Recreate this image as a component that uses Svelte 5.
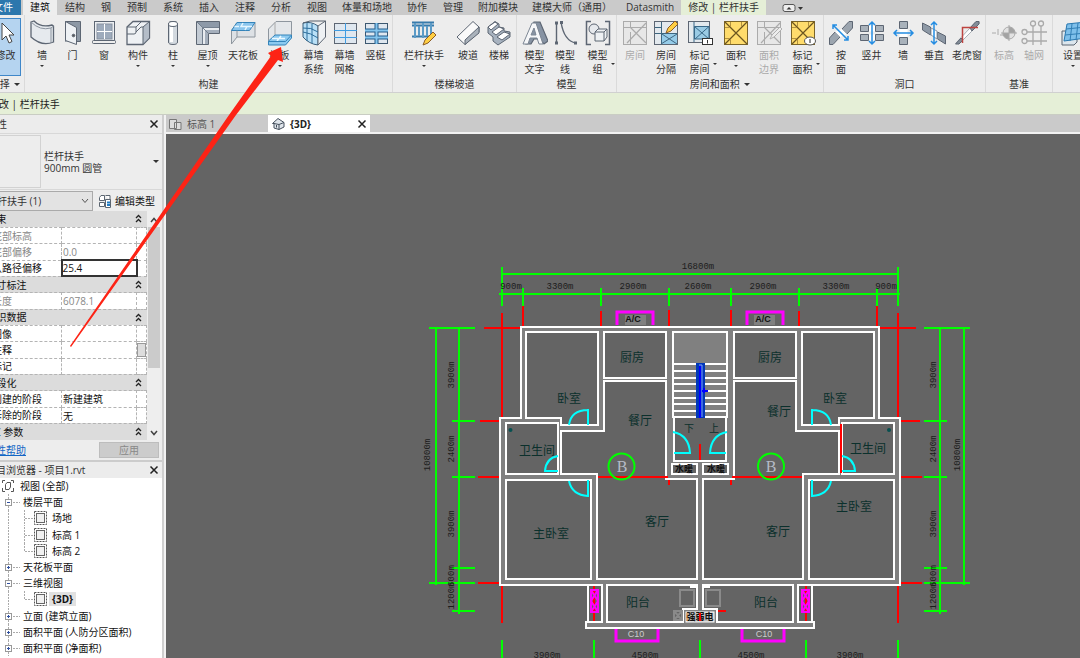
<script>
    const tabs = [ "结构", "钢", "预制", "系统", "插入", "注释", "分析", "视图", "体量和场地", "协作", "管理", "附加模块", "建模大师（通用）", "Datasmith" ];

    const groups = [
        { id: "build", title: "构建", tools: [
            { icon: "wall", lines: ["墙"], menu: "below" },
            { icon: "door", lines: ["门"] },
            { icon: "window", lines: ["窗"] },
            { icon: "component", lines: ["构件"], menu: "below" },
            { icon: "column", lines: ["柱"], menu: "below" },
            { icon: "roof", lines: ["屋顶"], menu: "below" },
            { icon: "ceiling", lines: ["天花板"] },
            { icon: "floor", lines: ["楼板"], menu: "below" },
            { icon: "curtain", lines: ["幕墙", "系统"] },
            { icon: "grid", lines: ["幕墙", "网格"] },
            { icon: "mullion", lines: ["竖梃"] }
        ] },
        { id: "stairs", title: "楼梯坡道", tools: [
            { icon: "railing", lines: ["栏杆扶手"], menu: "below" },
            { icon: "ramp", lines: ["坡道"] },
            { icon: "stair", lines: ["楼梯"] }
        ] },
        { id: "model", title: "模型", tools: [
            { icon: "text", lines: ["模型", "文字"] },
            { icon: "line", lines: ["模型", "线"] },
            { icon: "group", lines: ["模型", "组"], menu: "side" }
        ] },
        { id: "room", title: "房间和面积", more: true, tools: [
            { icon: "room", lines: ["房间"], off: true },
            { icon: "separate", lines: ["房间", "分隔"] },
            { icon: "tagroom", lines: ["标记", "房间"], menu: "side" },
            { icon: "area", lines: ["面积"], menu: "below" },
            { icon: "boundary", lines: ["面积", "边界"], off: true },
            { icon: "tagarea", lines: ["标记", "面积"], menu: "side" }
        ] },
        { id: "opening", title: "洞口", tools: [
            { icon: "byface", lines: ["按", "面"] },
            { icon: "shaft", lines: ["竖井"] },
            { icon: "wallopen", lines: ["墙"] },
            { icon: "vertical", lines: ["垂直"] },
            { icon: "dormer", lines: ["老虎窗"] }
        ] },
        { id: "datum", title: "基准", tools: [
            { icon: "level", lines: ["标高"], off: true },
            { icon: "axis", lines: ["轴网"], off: true }
        ] },
        { id: "plane", title: "", tools: [
            { icon: "set", lines: ["设置"], menu: "below" }
        ] }
    ];

    const props = [
        { head: "约束" },
        { name: "底部标高", value: "", off: true },
        { name: "底部偏移", value: "0.0", off: true },
        { name: "从路径偏移", value: "25.4", focus: true },
        { head: "尺寸标注" },
        { name: "长度", value: "6078.1", off: true },
        { head: "标识数据" },
        { name: "图像", value: "" },
        { name: "注释", value: "", button: true },
        { name: "标记", value: "" },
        { head: "阶段化" },
        { name: "创建的阶段", value: "新建建筑" },
        { name: "拆除的阶段", value: "无" },
        { head: "IFC 参数" }
    ];

    const tree = [
        { level: 0, text: "视图 (全部)" },
        { level: 1, text: "楼层平面", open: true },
        { level: 2, text: "场地" },
        { level: 2, text: "标高 1" },
        { level: 2, text: "标高 2", last: true },
        { level: 1, text: "天花板平面" },
        { level: 1, text: "三维视图", open: true },
        { level: 2, text: "{3D}", last: true, active: true },
        { level: 1, text: "立面 (建筑立面)" },
        { level: 1, text: "面积平面 (人防分区面积)" },
        { level: 1, text: "面积平面 (净面积)" }
    ];

    const rooms = [
        ["厨房", 632, 357], ["卧室", 569, 398], ["餐厅", 640, 420], ["卫生间", 537, 450],
        ["主卧室", 551, 533], ["客厅", 657, 521], ["阳台", 638, 602],
        ["厨房", 770, 357], ["卧室", 835, 398], ["餐厅", 779, 411], ["卫生间", 868, 448],
        ["主卧室", 854, 506], ["客厅", 778, 531], ["阳台", 766, 602]
    ];

    const dimsAcross = [
        ["16800m", 698, 266], ["900m", 511, 286], ["3300m", 560, 286], ["2900m", 633, 286], ["2600m", 698, 286],
        ["2900m", 763, 286], ["3300m", 836, 286], ["900m", 886, 286],
        ["3900m", 547, 655], ["4500m", 645, 655], ["4500m", 751, 655], ["3900m", 850, 655]
    ];

    const dimsUp = [
        ["3900m", 451, 375], ["2400m", 451, 449], ["3900m", 451, 524], ["600m", 451, 576], ["1200m", 451, 596], ["10800m", 427, 455],
        ["3900m", 933, 375], ["2400m", 933, 449], ["3900m", 933, 524], ["600m", 933, 576], ["1200m", 933, 596], ["10800m", 957, 455]
    ];

    const steps = [364, 371, 378, 384, 391, 398, 404, 411, 417];
</script>

{#snippet cross()}
    <svg width="10" height="10" viewBox="0 0 10 10"><path d="M1.5 1.5 8.5 8.5M8.5 1.5 1.5 8.5" stroke="#222" stroke-width="1.5" /></svg>
{/snippet}

{#snippet roombase(fill, stroke)}
    <rect x="1.500" y="1.500" width="23" height="23" {fill} {stroke} />
    <path d="M2 7.500H8M8.500 2V8M8.500 12V24M8 7.500H24" fill="none" {stroke} />
    <path d="M8 7 24 23M24 3 5 23" fill="none" {stroke} stroke-width="1.200" />
{/snippet}

{#snippet areabase()}
    <rect x="1.500" y="1.500" width="23" height="23" fill="#ffdc6c" stroke="#7a6429" />
    <path d="M2 2 24 24M24 2 2 24" stroke="#6b5520" stroke-width="1.200" />
    <path d="M7.500 2V7M2 7.500H7M18.500 2V7M7.500 19V24M7 18.500H2" stroke="#b3923f" />
{/snippet}

{#snippet icon(name)}
    <svg class="icon" width="26" height="26" viewBox="0 0 26 26" fill="none" stroke="#5d6673" stroke-width="1">
        {#if name == "wall"}
            <path d="M2 2 5 1Q12 8 23 5L24.500 6V22Q13 27 2 17Z" fill="#e6eaee" stroke-width="1.3" />
            <path d="M2 2Q11 11 22 8V23M22 8 24.500 6" stroke="#8b939e" />
        {:else if name == "door"}
            <path d="M5.500 21.500V1.500H20.500V21.500H17" fill="#8d98a5" />
            <path d="M5.500 1.500 16.500 7.500V24.500L5.500 20.500Z" fill="#eef1f4" />
            <circle cx="13.500" cy="15.500" r="1.300" fill="#555" />
        {:else if name == "window"}
            <rect x="3.500" y="1.500" width="20" height="19" fill="#eceff2" />
            <rect x="6" y="4" width="15" height="15" fill="#9eabbc" stroke="#8792a0" />
            <path d="M13.500 4V19M6 11.500H21" stroke="#fff" />
            <rect x="1.500" y="20.500" width="23" height="3" rx="1" fill="#eee" />
        {:else if name == "component"}
            <path d="M2 7 8 1.500H24.500V18L18 24.500H2V14Z" fill="#eef1f4" stroke-width="1.300" />
            <path d="M18 7 24.500 1.500V18L18 24.500Z" fill="#b4bdc8" />
            <path d="M2 14H9Q11 14 11 12V7H2M11 7 16 2M11 12 16 7H18" />
        {:else if name == "column"}
            <path d="M8.500 4Q8.500 1.500 13 1.500T17.500 4V22Q17.500 24.500 13 24.500T8.500 22Z" fill="#d3d9df" />
            <path d="M11.500 7V22" stroke="#fff" stroke-width="3" />
            <ellipse cx="13" cy="4" rx="4.500" ry="2.500" fill="#fff" />
        {:else if name == "roof"}
            <path d="M1.500 1.500H24.500V13.500H13.500V24.500H1.500Z" fill="#c3cbd4" />
            <path d="M2 2 7.500 7.500H24V2Z" fill="#8d99a8" stroke="none" />
            <path d="M7.500 7.500V24H13V13H24V7.500Z" fill="#e9ecf0" stroke="none" />
            <path d="M13 13V24H10V10H24V13Z" fill="#a5afbc" stroke="none" />
            <path d="M7.500 7.500H24M7.500 7.500V24M2 2 13 13" stroke="#737f8e" />
        {:else if name == "ceiling"}
            <path d="M1.500 10.500 7 2.500H25V17H7L1.500 24Z" fill="#dde1e5" stroke="#8e969e" />
            <path d="M1.500 10.500 7 2.500H25L19.500 10.500Z" fill="#8ac5ed" stroke="#3484ba" />
            <path d="M4.500 6.500H9M13 3 11 6.500H17M15 10 17 6.500H22" stroke="#e5f6ff" stroke-width="1.500" />
            <path d="M7 10.500V17" stroke="#8e969e" />
        {:else if name == "floor"}
            <path d="M1.500 21V9L9 1.500H24.500V15L17 24Z" fill="#e4e7ea" stroke="#8e969e" />
            <path d="M8 2.500V15" stroke="#aaa" />
            <path d="M1.500 21 8 15H24.500V18L18.500 25H1.500Z" fill="#8ccaf0" stroke="#3484ba" />
            <path d="M5 18.500H11M14 16 12 18.500H18M10 21 12 18.500" stroke="#eaf8ff" stroke-width="1.500" />
            <path d="M2 21.500H18.500L24 15.500" stroke="#3484ba" />
        {:else if name == "curtain"}
            <path d="M2 3Q10 1 17 6V25Q8 24 2 17Z" fill="#b9e0f7" stroke="#365d7b" />
            <path d="M17 6 24.500 1V17L17 25Z" fill="#eef1f4" />
            <path d="M2 3 9 1H24.500" stroke="#56616d" />
            <path d="M6 3V21M11 4V23M2 8Q10 7 17 12M2 12Q10 13 17 18" stroke="#2c6e9c" />
        {:else if name == "grid"}
            <rect x="2.500" y="3.500" width="22" height="20" fill="#dfe7ef" />
            <path d="M13.500 3V24M2 10.500H25M2 17.500H25" stroke="#409ce1" />
        {:else if name == "mullion"}
            <rect x="2.500" y="3.500" width="22" height="20" fill="#dfe7ef" stroke="#3d5870" />
            <path d="M13.500 3V24M2 10.500H25M2 17.500H25" stroke="#245d8c" stroke-width="4" />
            <path d="M13.500 3V24M2 10.500H25M2 17.500H25" stroke="#84c5ed" stroke-width="2" />
        {:else if name == "railing"}
            <path d="M1 2.500H23M1 5.500H23M1 16.500H21" stroke="#387bab" stroke-width="2" />
            <path d="M4 3V18M8 6V16M12 3V18M16 6V16M20 3V14" stroke="#5b9bc7" stroke-width="2" />
            <path d="M12 25 14 20 22 12 25 15 17 23Z" fill="#ffcf43" stroke="#8b5b27" />
        {:else if name == "ramp"}
            <path d="M2 17 18 1.500 24 7V12L10 24.500Z" fill="#fafafa" />
            <path d="M10 24.500V20L24 7V13Z" fill="#aab2bb" />
        {:else if name == "stair"}
            <path d="M2 7 9 1.500 13 4V7L18 8V11L24 12V17L12 25 7 21V17L2 13Z" fill="#a7b2bf" />
            <path d="M2 7 9 2 12 4 5 10ZM6 12 13 7 18 9 10 15ZM11 17 18 12 24 14 16 20Z" fill="#fff" />
        {:else if name == "text"}
            <path d="M4 24 12 2H18L26 21 22 24 18 19H12L9 24ZM14 14H17L15 8Z" fill="#8793a3" stroke-width="1.200" />
            <path d="M1 24 10 3H14L21 24H17L15 18H8L6 24ZM9 15H14L12 8Z" fill="#f6f7f9" stroke="#7d8794" />
        {:else if name == "line"}
            <path d="M4.500 3V24M9 2Q12 21 24 23" stroke-width="1.400" />
            <path d="M3 1.500H6V4.500H3ZM3 21.500H6V24.500H3ZM8 1H11V4H8ZM22 21.500H25V24.500H22Z" fill="#5d6673" stroke="none" />
        {:else if name == "group"}
            <path d="M6 1.500H1.500V24.500H6M20 1.500H24.500V24.500H20" stroke-width="1.500" />
            <circle cx="9" cy="9" r="5" fill="#e6e9ed" />
            <path d="M10 12 13 9H22V17L19 21H10Z" fill="#eef1f4" />
            <path d="M10 12H19V21M19 12 22 9" />
        {:else if name == "room"}
            <g opacity=".6">{@render roombase("#e4e4e4", "#808080")}</g>
        {:else if name == "separate"}
            <rect x="1.500" y="1.500" width="23" height="23" fill="#e3e9ee" />
            <rect x="8" y="14" width="16" height="10" fill="#96cce9" stroke="none" />
            <path d="M2 7.500H8M8.500 2V24M2 13.500H24M8 24 24 14M9 14 24 24" stroke="#3d6680" />
            <path d="M13 13 15 8 22 1 25 4 18 11Z" fill="#ffcf43" stroke="#8b5b27" />
        {:else if name == "tagroom"}
            <rect x="1.500" y="1.500" width="21" height="21" fill="#e3e9ee" />
            <path d="M7.500 6.500H22V19H7.500ZM7.500 6.500 22 19M22 6.500 8 19M7 2V22" fill="#9acbe5" stroke="#396989" />
            <rect x="15.500" y="18.500" width="10" height="6" fill="#fff" stroke="#333" />
            <path d="M20.500 20V23.500" stroke="#333" />
        {:else if name == "area"}
            {@render areabase()}
        {:else if name == "boundary"}
            <g opacity=".6">
                {@render roombase("#e4e4e4", "#808080")}
                <path d="M14 19 16 15 24 7 26 9 18 17Z" fill="#eee" stroke="#888" />
            </g>
        {:else if name == "tagarea"}
            {@render areabase()}
            <ellipse cx="20" cy="21" rx="5.500" ry="4" fill="#fff" stroke="#555" />
            <path d="M20 19V23" stroke="#222" />
        {:else if name == "byface"}
            <path d="M14 9 21 1.500H24.500V8L19 14ZM1.500 18 7 12 12 17 5 24.500H1.500Z" fill="#9ca5af" />
            <path d="M7 12 14 9 19 14 12 17Z" fill="#fff" stroke="none" />
            <path d="M5 5 20 20M5 9V5H9M20 16V20H16" stroke="#258de2" stroke-width="1.500" />
        {:else if name == "shaft"}
            <path d="M1.500 5.500H9.500V11.500H1.500ZM16.500 5.500H24.500V11.500H16.500ZM1.500 14.500H9.500V20.500H1.500ZM16.500 14.500H24.500V20.500H16.500Z" fill="#a9b2bb" />
            <path d="M10 5.500H16V11.500H10ZM10 14.500H16V20.500H10Z" fill="#fff" stroke="none" />
            <path d="M13 2V24M10 5 13 2 16 5M10 21 13 24 16 21" stroke="#258de2" stroke-width="1.500" />
        {:else if name == "wallopen"}
            <path d="M9.500 1.500H17.500V8.500H9.500ZM9.500 17.500H17.500V24.500H9.500Z" fill="#a9b2bb" />
            <path d="M9.500 9H17.500V17H9.500Z" fill="#fff" stroke="none" />
            <path d="M4 13H23M7 10 4 13 7 16M20 10 23 13 20 16" stroke="#258de2" stroke-width="1.500" />
        {:else if name == "vertical"}
            <path d="M1.500 3 9.500 7V15L1.500 10ZM16.500 12 24.500 16V24L16.500 19Z" fill="#8e99a6" />
            <path d="M10 8 16 11V19L10 15Z" fill="#fff" stroke="#8e99a6" />
            <path d="M13 2V24M10 5 13 2 16 5M10 21 13 24 16 21" stroke="#258de2" stroke-width="1.500" />
        {:else if name == "dormer"}
            <path d="M2 23 22 1.500H25V4L5 24Z" fill="#fff" stroke="#aab0b6" />
            <path d="M16 8 22 1.500H25V4L18 11ZM1.500 24 7 18 9 20 5 24Z" fill="#838d98" />
            <path d="M8.500 23V7.500H24" stroke="#be4440" stroke-width="1.500" />
        {:else if name == "level"}
            <g stroke="#aaa">
                <path d="M1 13H5M7 9V15M9 15H14M18 5V21M10 13H26" />
                <circle cx="18" cy="13" r="6" fill="#e2e2e2" />
                <path d="M18 13V7A6 6 0 0 1 24 13ZM18 13V19A6 6 0 0 1 12 13Z" fill="#a3a3a3" />
            </g>
        {:else if name == "axis"}
            <g stroke="#aaa" stroke-width="1.300">
                <path d="M12 6V25M20 6V25M6 12H26M6 21H26" />
                <circle cx="12" cy="3.500" r="2.500" /><circle cx="20" cy="3.500" r="2.500" /><circle cx="3.500" cy="12" r="2.500" /><circle cx="3.500" cy="21" r="2.500" />
            </g>
        {:else if name == "set"}
            <path d="M2 11H17V22L14 25H2Z" fill="#dce6ed" />
            <path d="M7 4 26 2V18L4 21Z" fill="#7fc0eb" stroke="#2877af" />
            <path d="M12 4 10 21M18 3 16 20M24 2 22 18M6 9 26 7M5 15 26 13" stroke="#327fb5" />
        {:else if name == "modify"}
            <path d="M9 3V20L13 16 16 23 19 21.500 16 15H21Z" fill="#fff" stroke="#444" />
        {/if}
    </svg>
{/snippet}

{#snippet halfplan()}
    <path class="red" d="M502 313V417M523 304V326M601 311V326M669 310V326M484 328H521M480 421H500M478 477H500M478 583H500M502 586V623" />
    <path class="slab" d="M700 327H521V418H500V585H588V622H586V628H700" />
    <g class="inner">
        <path d="M526 332H598V425H561V418H526Z" />
        <path d="M604 332H666V378H604Z" />
        <path d="M604 381H666V479H697V579H597V474H561V431H604Z" />
        <path d="M506 423H558V474H506Z" />
        <path d="M506 480H591V579H506Z" />
        <path d="M588 585H602V622H588Z" />
        <path d="M607 585H697V609H683V622H607Z" />
        <path d="M700 417H674V461H700" />
        <path d="M672 464H697V474H672Z" />
    </g>
    <path class="red" d="M598 477H668M669 480V485M594 586V621M674 611H682" />
    <path class="cyan" d="M588 409V425M569 425Q571 410 588 410M558 471H545Q546 458 558 456M588 480V496Q572 495 569 481M673 432Q689 435 690 453H674" />
    <path class="magenta" d="M617 325V312H653V325M616 629V641H658V629" />
    <path class="magenta thin" d="M591 590H598V612H591ZM591 590 598 601 591 612M598 590 591 601 598 612" />
    <path class="fixture" d="M680 590H694V606H680Z" />
    <path class="white" d="M690 587H697" />
    <rect x="625" y="315" width="21" height="10" fill="#808080" />
    <path class="green" d="M502 267V306M523 288V306M601 288V306M669 288V306M502 640V660M594 640V660" />
{/snippet}

<div class="app">
    <nav class="tabs">
        <button class="file">文件</button>
        <button class="current">建筑</button>
        {#each tabs as tab}
            <button class:long={tab.length > 3}>{tab}</button>
        {/each}
        <button class="context">修改 | 栏杆扶手</button>
        <button class="toggle" aria-label="最小化">
            <svg width="24" height="10" viewBox="0 0 24 10"><rect x="1" y="1.500" width="12" height="7" rx="2" fill="#eee" stroke="#555" /><path d="M4.500 6.500 7 4 9.500 6.500ZM16 4H21L18.500 7Z" fill="#333" /></svg>
        </button>
    </nav>

    <div class="ribbon">
        <section class="group select">
            <div class="tools">
                <button class="tool pressed">{@render icon("modify")}<span class="label">修改</span></button>
            </div>
            <h2>选择 <i class="caret big"></i></h2>
        </section>
        {#each groups as group}
            <section class="group {group.id}">
                <div class="tools">
                    {#each group.tools as tool}
                        <button class="tool" disabled={tool.off}>
                            {@render icon(tool.icon)}
                            <span class="label" class:side={tool.menu == "side"}>
                                <span>{#each tool.lines as line}<span class="line">{line}</span>{/each}</span>
                                {#if tool.menu}<i class="caret"></i>{/if}
                            </span>
                        </button>
                    {/each}
                </div>
                <h2>{group.title} {#if group.more}<i class="caret big"></i>{/if}</h2>
            </section>
        {/each}
    </div>

    <div class="options">修改 | 栏杆扶手</div>

    <div class="work">
        <aside>
            <header><span>属性</span><button aria-label="关闭属性">{@render cross()}</button></header>
            <button class="type">
                <span class="thumb"></span>
                <span class="typename">栏杆扶手<br />900mm 圆管</span>
                <i class="caret big"></i>
            </button>
            <div class="filter">
                <div class="pick">
                    <select aria-label="类别"><option>栏杆扶手 (1)</option></select>
                    <svg width="8" height="6" viewBox="0 0 8 6"><path d="M1 1 4 4.500 7 1" fill="none" stroke="#555" /></svg>
                </div>
                <button class="edit">
                    <svg width="14" height="14" viewBox="0 0 14 14" fill="#fff" stroke="#5b6570"><path d="M1.500 3.500 3 1.500H6.500V6.500H1.500ZM1.500 8.500H6.500V12.500H1.500ZM7.500 1.500H12V6M7.500 5.500H12.500V13.500H7.500Z" /><path d="M9 8.500H12M9 11H12" stroke="#217cc4" stroke-width="2" /></svg>
                    编辑类型
                </button>
            </div>
            <div class="sheet">
                <table>
                    <colgroup><col class="names" /><col /><col class="ends" /></colgroup>
                    <tbody>
                        {#each props as row, i}
                            {#if row.head}
                                <tr class="head"><th colspan="2">{row.head}</th><td><svg width="7" height="9" viewBox="0 0 7 9"><path d="M1 4 3.500 1.500 6 4M1 8 3.500 5.500 6 8" fill="none" stroke="#222" stroke-width="1.300" /></svg></td></tr>
                            {:else}
                                <tr class:off={row.off}>
                                    <th><label for="prop{i}">{row.name}</label></th>
                                    <td class:focus={row.focus}><input id="prop{i}" value={row.value} disabled={row.off} /></td>
                                    <td>{#if row.button}<button class="mini" aria-label="浏览"></button>{/if}</td>
                                </tr>
                            {/if}
                        {/each}
                    </tbody>
                </table>
                <div class="scroll">
                    <svg width="8" height="6" viewBox="0 0 8 6"><path d="M1 5 4 1.500 7 5" fill="none" stroke="#444" stroke-width="1.500" /></svg>
                    <span class="bar"></span>
                    <svg width="8" height="6" viewBox="0 0 8 6"><path d="M1 1 4 4.500 7 1" fill="none" stroke="#444" stroke-width="1.500" /></svg>
                </div>
            </div>
            <footer><a href="#help">属性帮助</a><button disabled>应用</button></footer>
            <header class="second"><span>项目浏览器 - 项目1.rvt</span><button aria-label="关闭浏览器">{@render cross()}</button></header>
            <div class="treebox">
                <ul class="tree">
                    {#each tree as node}
                        <li>
                            {#if node.level == 0}
                                <svg width="17" height="16" viewBox="0 0 17 16" fill="none" stroke="#555"><path d="M5 2.500H2.500V5M2.500 10V13.500H5M11 2.500H13.500V5M13.500 10V13.500H11M5.500 6.500 7 4.500H10.500V9L9 11.500H5.500Z" /></svg>
                            {:else}
                                <svg width={node.level == 1 ? 20 : 34} height="16" viewBox="0 0 {node.level == 1 ? 20 : 34} 16" fill="none" stroke="#aaa">
                                    <path d="M8.500 0V16" stroke-dasharray="2 1" />
                                    {#if node.level == 1}
                                        <path d="M13 8.500H20" stroke-dasharray="2 1" />
                                        <rect x="5.500" y="5.500" width="6" height="6" fill="#fff" stroke="#999" />
                                        <path d={node.open ? "M7 8.500H10" : "M7 8.500H10M8.500 7V10"} stroke="#2f4f9f" />
                                    {:else}
                                        <path d="M24.500 0V{node.last ? 8 : 16}M25 8.500H34" stroke-dasharray="2 1" />
                                    {/if}
                                </svg>
                            {/if}
                            {#if node.level == 2}
                                <svg width="13" height="14" viewBox="0 0 13 14"><rect x=".5" y=".5" width="12" height="13" fill="#fff" stroke="#555" stroke-dasharray="2 1" /><rect x="2.500" y="2.500" width="8" height="9" fill="#f1f1f1" stroke="#666" /></svg>
                            {/if}
                            <span class:active={node.active}>{node.text}</span>
                        </li>
                    {/each}
                </ul>
            </div>
        </aside>

        <main>
            <div class="views">
                <button class="view">
                    <svg width="13" height="12" viewBox="0 0 13 12" fill="#ddd" stroke="#777"><path d="M.5 1.500H7.500V10.500H.5ZM5.500 4.500H12V11.500H5.500Z" /></svg>
                    标高 1
                </button>
                <button class="view open">
                    <svg width="13" height="12" viewBox="0 0 13 12" fill="#dfe5eb" stroke="#444f5c"><path d="M.5 5.500 6 .5 12 4.500V9L7 11.500 2 10V5.500Z" /><path d="M2 5.500 7 6.500 12 4.500M7 6.500V11.500M4.500 7V9.500" /></svg>
                    {"{3D}"}
                    {@render cross()}
                </button>
            </div>
            <svg class="plan" width="100%" height="100%" role="img" aria-label="户型平面图">
                <g transform="translate(-166 -134)">
                    {@render halfplan()}
                    <g transform="translate(1400 0) scale(-1 1)">{@render halfplan()}</g>
                    <path class="fixture" d="M674 611H682V620H674ZM674 611 682 620M682 611 674 620" />

                    <rect x="673" y="332" width="54" height="32" class="core" />
                    <path class="white" d="M673 332V418M727 332V418" />
                    {#each steps as y}
                        <path class="white" d="M674 {y}H727" />
                    {/each}
                    <rect x="696" y="363" width="9" height="55" fill="#0038b8" />
                    <path d="M699 365H702V417" fill="none" stroke="#7f9dff" />
                    <path d="M700 366V418M702 391H708M704 388V393" stroke="#00f" stroke-width="2" />
                    <path class="red" d="M841 424V473M700 444V460" />

                    <rect x="686" y="612" width="28" height="10" fill="#bbb" stroke="#fff" />
                    <text class="tiny" x="700" y="620">强弱电</text>
                    <path class="red" d="M700 613V621" />
                    <path d="M687 613V621" stroke="#e07a20" />

                    <path class="green" d="M502 274H898M499 294H900" />
                    <path class="green" d="M429 328H475M436 328V585M459 328V614M452 421H475M452 477H475M452 568H475M429 583H475M452 611H475" />
                    <path class="green" d="M924 328H970M964 328V585M940 328V614M924 421H947M924 477H947M924 568H947M924 583H970M924 611H947" />
                    <path class="green" d="M700 640V660" />
                    <circle class="green" cx="621.500" cy="466.500" r="13" />
                    <circle class="green" cx="771" cy="466.500" r="13" />
                    <text class="mark" x="622" y="472">B</text>
                    <text class="mark" x="771" y="472">B</text>
                    <circle cx="510.500" cy="430" r="2" fill="#075050" />
                    <circle cx="889" cy="430" r="2" fill="#075050" />

                    {#each rooms as [name, x, y]}
                        <text class="name" {x} y={y + 5}>{name}</text>
                    {/each}
                    <text class="name small" x="689" y="432">下</text>
                    <text class="name small" x="714" y="432">上</text>
                    <text class="tiny" x="684" y="472">水暖</text>
                    <text class="tiny" x="716" y="472">水暖</text>
                    <text class="tiny" x="633" y="322">A/C</text>
                    <text class="tiny" x="763" y="322">A/C</text>
                    <text class="code" x="636" y="637">C10</text>
                    <text class="code" x="764" y="637">C10</text>

                    {#each dimsAcross as [text, x, y]}
                        <text class="dim" {x} y={y + 3}>{text}</text>
                    {/each}
                    {#each dimsUp as [text, x, y]}
                        <text class="dim" transform="translate({x + 3} {y}) rotate(-90)">{text}</text>
                    {/each}
                </g>
            </svg>
        </main>
    </div>
</div>

<svg class="pointer" width="300" height="360" viewBox="0 0 300 360"><path d="M70 346 229 115 271 56 268 53 281 47 283 62 278 60 236 115 71 347Z" fill="#fd2315" /></svg>

<style>
    :global(body) {
        margin: 0;
        overflow: hidden;
    }

    /* the left edge of the window sits outside of the screen */
    .app {
        display: flex;
        flex-direction: column;
        height: 100vh;
        margin-left: -24px;
        background: #ededed;
        color: #333;
        font: 10px/14px "Open Sans", "Noto Sans CJK SC", sans-serif;
    }

    button, input, select {
        font: inherit;
        color: inherit;
        margin: 0;
        padding: 0;
        border: none;
        background: none;
    }

    svg {
        display: block;
        flex: none;
    }

    .tabs {
        display: flex;
        flex: none;
        height: 15px;
        background: #cacaca;
        white-space: nowrap;
    }

    .tabs button {
        padding: 0 8px;
        line-height: 15px;
    }

    .tabs .file {
        padding-left: 17px;
        margin-right: 2px;
        color: white;
        background: #2c77ad;
    }

    .tabs .long {
        padding: 0 7px;
    }

    .tabs .current {
        padding: 0 7px;
        background: #eee;
        color: #111;
    }

    .tabs .context {
        padding: 0 7px;
        background: #e5efd7;
    }

    .tabs .toggle {
        padding: 0 16px;
    }

    .ribbon {
        display: flex;
        flex: none;
        height: 77px;
        border-bottom: 1px solid #d0d0d0;
        overflow: hidden;
    }

    .group {
        display: flex;
        flex-direction: column;
        flex: none;
        box-sizing: border-box;
        border-right: 1px solid #dadada;
    }

    .group h2 {
        margin: 0;
        font-size: 10px;
        font-weight: normal;
        line-height: 14px;
        text-align: center;
    }

    .tools {
        display: grid;
        height: 62px;
    }

    .select { width: 49px; }
    .select .tools { grid-template-columns: 31px; padding: 3px 0 0 14px; height: 59px; }
    .select h2 { padding-left: 10px; }
    .build { width: 368px; }
    .build .tools { grid-template-columns: 30px 31px 32px 36px 34px 35px 36px 37px 31px 31px 31px; padding-left: 2px; }
    .stairs { width: 124px; }
    .stairs .tools { grid-template-columns: 56px 32px 30px; padding-left: 3px; }
    .model { width: 100px; }
    .model .tools { grid-template-columns: 31px 30px 36px; padding-left: 2px; }
    .room { width: 207px; }
    .room .tools { grid-template-columns: 32px 30px 38px 34px 32px 36px; padding-left: 2px; }
    .opening { width: 162px; }
    .opening .tools { grid-template-columns: 30px 31px 32px 30px 36px; padding-left: 2px; }
    .datum { width: 67px; }
    .datum .tools { grid-template-columns: 30px 30px; padding-left: 3px; }
    .plane .tools { grid-template-columns: 40px; }

    .tool {
        display: flex;
        flex-direction: column;
        align-items: center;
        justify-content: flex-start;
        padding-top: 5px;
        white-space: nowrap;
    }

    .tool:disabled {
        color: #aaa;
    }

    .tool .icon {
        margin-bottom: 2px;
    }

    .pressed {
        box-sizing: border-box;
        height: 58px;
        padding-top: 1px;
        border: 1px solid #3f87c9;
        background: #b5d4f0;
    }

    .label {
        display: flex;
        flex-direction: column;
        align-items: center;
    }

    .line {
        display: block;
    }

    .side {
        flex-direction: row;
        gap: 3px;
        padding-left: 6px;
    }

    .caret {
        display: inline-block;
        border: 2px solid transparent;
        border-top-color: #333;
        border-bottom: none;
        vertical-align: 2px;
    }

    .label .caret {
        margin-top: 3px;
    }

    .caret.big {
        border-width: 3px;
        border-bottom: none;
        margin-left: 2px;
    }

    .options {
        flex: none;
        box-sizing: border-box;
        height: 22px;
        padding: 4px 0 0 13px;
        background: #e5efd7;
        border-bottom: 1px solid #c9cdc3;
        color: #222;
    }

    .work {
        display: flex;
        flex: 1;
        min-height: 0;
    }

    aside {
        display: flex;
        flex-direction: column;
        flex: none;
        width: 188px;
        border-right: 2px solid #cfcfcf;
        box-sizing: border-box;
    }

    header {
        display: flex;
        flex: none;
        align-items: center;
        justify-content: space-between;
        height: 18px;
        padding: 0 2px 0 11px;
        background: #ececec;
    }

    header button {
        padding: 0 1px;
    }

    .second {
        height: 16px;
        padding-left: 10px;
        border-top: 2px solid #ccc;
    }

    .type {
        display: flex;
        flex: none;
        align-items: center;
        box-sizing: border-box;
        height: 57px;
        padding-right: 3px;
        border: 1px solid #d8d8d8;
        border-right: none;
        text-align: left;
        line-height: 12px;
    }

    .thumb {
        box-sizing: border-box;
        width: 64px;
        height: 53px;
        border: 1px solid #d2d2d2;
    }

    .typename {
        flex: 1;
        padding-left: 3px;
    }

    .filter {
        display: flex;
        flex: none;
        height: 21px;
        align-items: center;
    }

    .pick {
        display: flex;
        align-items: center;
        box-sizing: border-box;
        width: 117px;
        height: 20px;
        padding-right: 3px;
        border: 1px solid #aaa;
        background: #e3e3e3;
    }

    .pick select {
        appearance: none;
        flex: 1;
        min-width: 0;
        padding-left: 10px;
    }

    .edit {
        display: flex;
        align-items: center;
        gap: 3px;
        padding-left: 5px;
        color: #111;
    }

    .sheet {
        display: flex;
        flex: none;
        height: 229px;
        padding-right: 2px;
        overflow: hidden;
    }

    table {
        width: 171px;
        height: 229px;
        table-layout: fixed;
        border-collapse: collapse;
        line-height: 12px;
        background: white;
    }

    .names {
        width: 85px;
    }

    .ends {
        width: 10px;
    }

    tr {
        height: 16px;
    }

    th, td {
        box-sizing: border-box;
        padding: 0;
        border: 1px dashed #b4b4b4;
        text-align: left;
        font-weight: normal;
        color: #111;
    }

    th {
        padding-left: 15px;
        white-space: nowrap;
    }

    tr.head th, tr.head td {
        padding-left: 10px;
        border: none;
        background: #dcdcdc;
    }

    tr.head td:last-child {
        padding: 0;
    }

    /* the fold mark leans over the value column */
    tr.head svg {
        margin-left: -2px;
    }

    .off th, .off td {
        color: #888;
    }

    td input {
        display: block;
        width: 72px;
        height: 13px;
        padding-left: 1px;
    }

    td.focus {
        border: 2px solid #333;
    }

    .focus input {
        height: 12px;
        padding-left: 0;
    }

    .mini {
        display: block;
        box-sizing: border-box;
        width: 9px;
        height: 14px;
        border: 1px solid #999;
        background: #ddd;
    }

    .scroll {
        display: flex;
        flex-direction: column;
        align-items: center;
        justify-content: space-between;
        flex: 1;
        padding: 6px 0 4px;
        background: #eee;
    }

    .bar {
        width: 12px;
        height: 141px;
        margin-bottom: auto;
        margin-top: 4px;
        background: #cbcbcb;
    }

    footer {
        display: flex;
        flex: none;
        align-items: center;
        justify-content: space-between;
        height: 20px;
        padding: 0 3px 0 10px;
    }

    footer a {
        color: #1266c5;
    }

    footer button {
        width: 60px;
        height: 16px;
        border: 1px solid #bdbdbd;
        box-sizing: border-box;
        background: #ccc;
        color: #888;
        line-height: 12px;
    }

    .treebox {
        flex: 1;
        min-height: 0;
        background: white;
        overflow: hidden;
    }

    .tree {
        display: grid;
        grid-template-rows: repeat(11, 1fr);
        height: 178px;
        margin: 0;
        padding: 0 0 0 24px;
        list-style: none;
        color: #111;
        white-space: nowrap;
    }

    .tree li {
        display: flex;
        align-items: center;
    }

    .tree span {
        padding-left: 3px;
    }

    .tree svg + svg + span {
        margin-left: 2px;
    }

    .tree .active {
        padding-right: 3px;
        font-weight: bold;
        background: #e1e1e1;
    }

    main {
        display: flex;
        flex-direction: column;
        flex: 1;
        min-width: 0;
        border-left: 2px solid #f2f2f2;
    }

    .views {
        display: flex;
        flex: none;
        height: 17px;
        background: #cacaca;
        border-bottom: 2px solid #f2f2f2;
    }

    .view {
        display: flex;
        align-items: center;
        gap: 5px;
        box-sizing: border-box;
        width: 102px;
        padding: 0 3px;
        color: #555;
    }

    .view.open {
        padding-left: 4px;
        background: white;
        color: #222;
        font-weight: bold;
    }

    .view.open svg:last-child {
        margin-left: auto;
    }

    .plan {
        flex: 1;
        min-height: 0;
        background: #646464;
    }

    .slab { fill: #808080; stroke: #fff; stroke-width: 2; }
    .inner path { fill: #646464; stroke: #fff; stroke-width: 2; }
    .core { fill: #808080; stroke: #fff; stroke-width: 2; }
    .white { fill: none; stroke: #fff; stroke-width: 2; }
    .red { fill: none; stroke: #f00; stroke-width: 2; }
    .green { fill: none; stroke: #0f0; stroke-width: 2; }
    .cyan { fill: none; stroke: #0ff; stroke-width: 2; }
    .magenta { fill: none; stroke: #f0f; stroke-width: 3; }
    .magenta.thin { stroke-width: 2; }
    .fixture { fill: none; stroke: #8a8a8a; stroke-width: 2; }

    .plan text {
        text-anchor: middle;
    }

    .name {
        font: 12px "Noto Sans CJK SC", sans-serif;
        fill: #0b302c;
    }

    .name.small {
        font-size: 10px;
    }

    .tiny {
        font: bold 9px "Liberation Sans", "Noto Sans CJK SC", sans-serif;
        fill: #111;
    }

    .code {
        font: 9px "Liberation Sans", sans-serif;
        fill: #ccc;
    }

    .mark {
        font: 16px "Liberation Serif", serif;
        fill: #b5bac6;
    }

    .dim {
        font: 9px "Liberation Mono", monospace;
        fill: #1c1c1c;
    }

    .pointer {
        position: absolute;
        top: 0;
        left: 0;
        pointer-events: none;
    }
</style>
